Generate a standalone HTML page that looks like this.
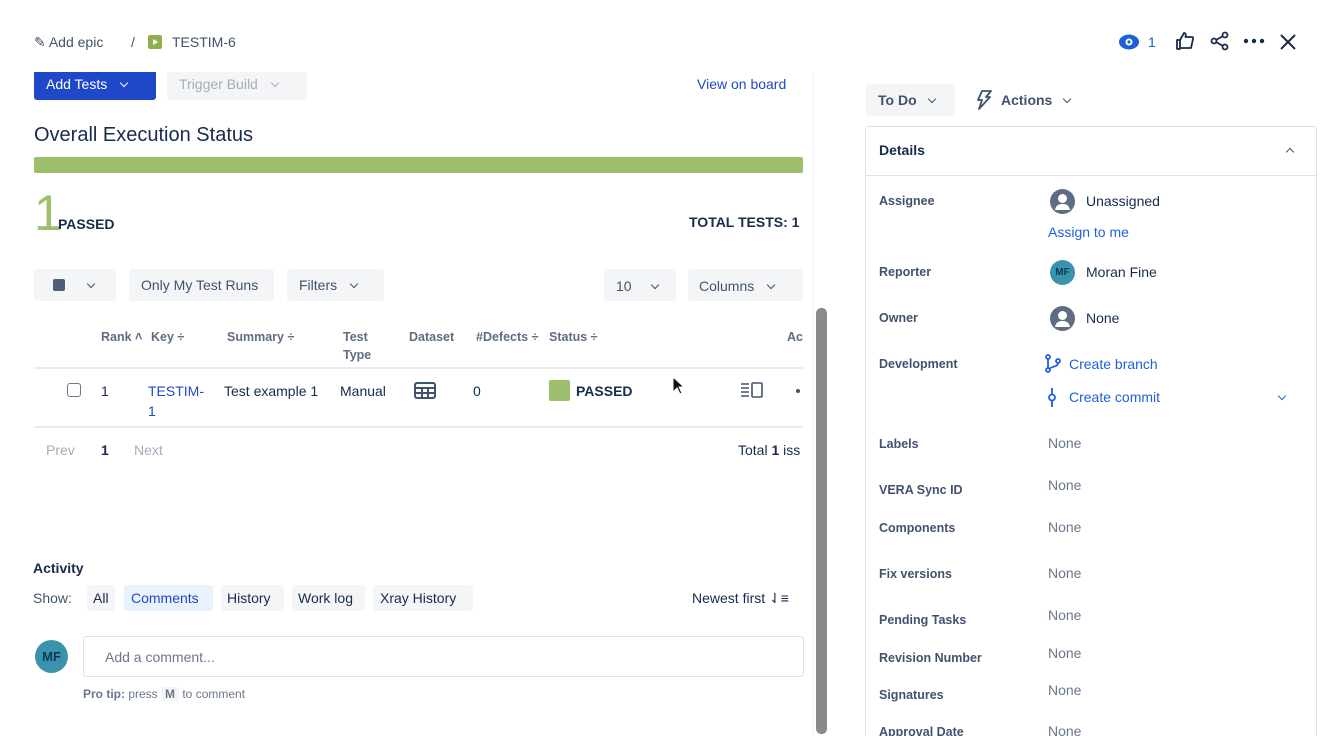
<!DOCTYPE html>
<html><head><meta charset="utf-8"><style>
*{margin:0;padding:0;box-sizing:border-box}
html,body{width:1336px;height:736px;overflow:hidden}
body{background:#fff;font-family:"Liberation Sans",sans-serif;color:#172b4d;position:relative}
.a{position:absolute;white-space:nowrap;line-height:16px}
.btn{position:absolute;background:#f4f5f7;border-radius:3px}
.lbl{position:absolute;left:879px;font-size:12.5px;font-weight:bold;color:#42526e;line-height:16px}
.val{position:absolute;left:1048px;font-size:14px;color:#6b778c;line-height:16px}
.th{position:absolute;font-size:12.5px;font-weight:bold;color:#5e6c84;line-height:18px}
.chev{display:inline-block;width:6px;height:6px;border-right:1.8px solid #42526e;border-bottom:1.8px solid #42526e;transform:rotate(45deg);margin-left:10px;position:relative;top:-3px}
</style></head><body>
<div class="a" style="left:34px;top:34px;font-size:14px;color:#42526e">✎ Add epic</div>
<div class="a" style="left:131px;top:34px;font-size:14px;color:#42526e">/</div>
<div style="position:absolute;left:148px;top:35px;width:14px;height:14px;background:#8fb04d;border-radius:2px"><div style="position:absolute;left:5px;top:3.5px;border-left:5px solid #fff;border-top:3.5px solid transparent;border-bottom:3.5px solid transparent"></div></div>
<div class="a" style="left:172px;top:34px;font-size:14px;color:#42526e">TESTIM-6</div>
<svg style="position:absolute;left:1118px;top:32px" width="22" height="20" viewBox="0 0 22 20"><ellipse cx="11" cy="10" rx="10" ry="7.5" fill="#1d5fd6"/><circle cx="11" cy="10" r="3.5" fill="#fff"/><circle cx="11" cy="10" r="1.6" fill="#1d5fd6"/></svg>
<div class="a" style="left:1148px;top:34px;font-size:14px;color:#1d5fd6">1</div>
<svg style="position:absolute;left:1175px;top:31px" width="20" height="20" viewBox="0 0 20 20" fill="none" stroke="#172b4d" stroke-width="1.8" stroke-linejoin="round"><path d="M2 9h3v9H2zM5 9l4-7c2 0 2 2 1.5 4H17c1 0 1.5 1 1 2l-2 9H5"/></svg>
<svg style="position:absolute;left:1210px;top:31px" width="20" height="20" viewBox="0 0 20 20" fill="none" stroke="#172b4d" stroke-width="1.8"><circle cx="15" cy="4" r="2.5"/><circle cx="4" cy="10" r="2.5"/><circle cx="15" cy="16" r="2.5"/><path d="M6 9l7-4M6 11l7 4"/></svg>
<svg style="position:absolute;left:1243px;top:38px" width="22" height="6" viewBox="0 0 22 6" fill="#172b4d"><circle cx="3" cy="3" r="2.2"/><circle cx="11" cy="3" r="2.2"/><circle cx="19" cy="3" r="2.2"/></svg>
<svg style="position:absolute;left:1279px;top:33px" width="18" height="18" viewBox="0 0 18 18" stroke="#172b4d" stroke-width="2"><path d="M2 2l14 14M16 2L2 16"/></svg>
<div style="position:absolute;left:34px;top:72px;width:122px;height:28px;background:#1f48c9;border-radius:0 0 3px 3px"></div>
<div class="a" style="left:46px;top:76px;font-size:14px;color:#fff">Add Tests<span class="chev" style="border-color:#fff;margin-left:14px"></span></div>
<div class="btn" style="left:167px;top:72px;width:140px;height:28px"></div>
<div class="a" style="left:179px;top:76px;font-size:14px;color:#a5adba">Trigger Build<span class="chev" style="border-color:#a5adba;margin-left:14px"></span></div>
<div class="a" style="left:697px;top:76px;font-size:14px;color:#1f48c9">View on board</div>
<div class="a" style="left:34px;top:123px;font-size:20px;line-height:24px">Overall Execution Status</div>
<div style="position:absolute;left:34px;top:157px;width:769px;height:16px;background:#9dbe6b;border-radius:2px"></div>
<div class="a" style="left:34px;top:188px;font-size:50px;line-height:50px;color:#9dbe6b">1</div>
<div class="a" style="left:58px;top:216px;font-size:14px;font-weight:bold">PASSED</div>
<div class="a" style="left:689px;top:214px;font-size:14px;font-weight:bold">TOTAL TESTS: 1</div>
<div class="btn" style="left:34px;top:269px;width:82px;height:32px"></div>
<div style="position:absolute;left:53px;top:279px;width:12px;height:12px;background:#505f79;border-radius:2px"></div>
<span class="chev" style="position:absolute;left:78px;top:281px"></span>
<div class="btn" style="left:129px;top:269px;width:145px;height:32px"></div>
<div class="a" style="left:141px;top:277px;font-size:14px;color:#42526e">Only My Test Runs</div>
<div class="btn" style="left:287px;top:269px;width:97px;height:32px"></div>
<div class="a" style="left:299px;top:277px;font-size:14px;color:#42526e">Filters<span class="chev" style="margin-left:14px"></span></div>
<div class="btn" style="left:604px;top:269px;width:72px;height:32px"></div>
<div class="a" style="left:616px;top:278px;font-size:14px;color:#42526e">10<span class="chev" style="margin-left:20px"></span></div>
<div class="btn" style="left:688px;top:269px;width:115px;height:32px"></div>
<div class="a" style="left:699px;top:278px;font-size:14px;color:#42526e">Columns<span class="chev" style="margin-left:14px"></span></div>
<div class="th" style="left:101px;top:328px">Rank ˄</div>
<div class="th" style="left:151px;top:328px">Key ÷</div>
<div class="th" style="left:227px;top:328px">Summary ÷</div>
<div class="th" style="left:343px;top:328px">Test<br>Type</div>
<div class="th" style="left:409px;top:328px">Dataset</div>
<div class="th" style="left:476px;top:328px">#Defects ÷</div>
<div class="th" style="left:549px;top:328px">Status ÷</div>
<div class="th" style="left:787px;top:328px">Ac</div>
<div style="position:absolute;left:34px;top:367px;width:769px;height:2px;background:#ebecf0"></div>
<div style="position:absolute;left:67px;top:383px;width:14px;height:14px;border:1.5px solid #6b778c;border-radius:3px"></div>
<div class="a" style="left:101px;top:383px;font-size:14px">1</div>
<div class="a" style="left:148px;top:381px;font-size:14px;color:#1f48c9;line-height:20px">TESTIM-<br>1</div>
<div class="a" style="left:224px;top:383px;font-size:14px">Test example 1</div>
<div class="a" style="left:340px;top:383px;font-size:14px">Manual</div>
<svg style="position:absolute;left:414px;top:382px" width="22" height="17" viewBox="0 0 22 17" fill="none" stroke="#42526e" stroke-width="2"><rect x="1" y="1" width="20" height="15" rx="2"/><path d="M1 6h20M1 11h20M8 6v10M14 6v10"/></svg>
<div class="a" style="left:473px;top:383px;font-size:14px">0</div>
<div style="position:absolute;left:549px;top:380px;width:21px;height:21px;background:#9dbe6b;border-radius:2px"></div>
<div class="a" style="left:576px;top:383px;font-size:14px;font-weight:bold">PASSED</div>
<svg style="position:absolute;left:672px;top:376px" width="14" height="20" viewBox="0 0 14 20"><path d="M1 1v15l4-4 3 6 2-1-3-6h5z" fill="#111" stroke="#fff"/></svg>
<svg style="position:absolute;left:740px;top:382px" width="24" height="16" viewBox="0 0 24 16" fill="none" stroke="#42526e" stroke-width="1.6"><path d="M1 2h8M1 6h8M1 10h8M1 14h8"/><rect x="12" y="1" width="10" height="14" rx="1"/></svg>
<div style="position:absolute;left:796px;top:389px;width:4px;height:4px;border-radius:2px;background:#42526e"></div>
<div style="position:absolute;left:34px;top:426px;width:769px;height:2px;background:#ebecf0"></div>
<div class="a" style="left:46px;top:442px;font-size:14px;color:#a5adba">Prev</div>
<div class="a" style="left:101px;top:442px;font-size:14px;font-weight:bold">1</div>
<div class="a" style="left:134px;top:442px;font-size:14px;color:#a5adba">Next</div>
<div class="a" style="left:738px;top:442px;font-size:14px">Total <b>1</b> iss</div>
<div class="a" style="left:33px;top:560px;font-size:14px;font-weight:bold;color:#172b4d">Activity</div>
<div class="a" style="left:33px;top:590px;font-size:14px;color:#42526e">Show:</div>
<div class="btn" style="left:87px;top:585px;width:28px;height:26px"></div><div class="a" style="left:93px;top:590px;font-size:14px">All</div>
<div class="btn" style="left:124px;top:585px;width:89px;height:26px;background:#e9f2ff"></div><div class="a" style="left:131px;top:590px;font-size:14px;color:#1f48c9">Comments</div>
<div class="btn" style="left:221px;top:585px;width:63px;height:26px"></div><div class="a" style="left:227px;top:590px;font-size:14px">History</div>
<div class="btn" style="left:292px;top:585px;width:73px;height:26px"></div><div class="a" style="left:298px;top:590px;font-size:14px">Work log</div>
<div class="btn" style="left:373px;top:585px;width:100px;height:26px"></div><div class="a" style="left:380px;top:590px;font-size:14px">Xray History</div>
<div class="a" style="left:692px;top:590px;font-size:14px">Newest first ⇃≡</div>
<div style="position:absolute;left:35px;top:640px;width:33px;height:33px;border-radius:50%;background:#3b93ab;color:#0c3b5a;font-size:13px;font-weight:bold;text-align:center;line-height:33px">MF</div>
<div style="position:absolute;left:83px;top:636px;width:721px;height:41px;border:1px solid #dfe1e6;border-radius:3px"></div>
<div class="a" style="left:105px;top:649px;font-size:14px;color:#6b778c">Add a comment...</div>
<div class="a" style="left:83px;top:686px;font-size:12px;color:#6b778c"><b>Pro tip:</b> press <span style="background:#f4f5f7;padding:0 4px;font-weight:bold">M</span> to comment</div>
<div style="position:absolute;left:813px;top:72px;width:1px;height:664px;background:#f1f2f4"></div>
<div style="position:absolute;left:816px;top:308px;width:11px;height:426px;background:#8a8a8a;border-radius:5px"></div>
<div class="btn" style="left:866px;top:84px;width:89px;height:32px"></div>
<div class="a" style="left:878px;top:92px;font-size:14px;font-weight:bold;color:#42526e">To Do<span class="chev" style="margin-left:12px"></span></div>
<svg style="position:absolute;left:975px;top:90px" width="18" height="20" viewBox="0 0 18 20" fill="none" stroke="#42526e" stroke-width="1.8" stroke-linejoin="round"><path d="M7 1h9l-5 6h4L4 19l3-9H3z"/></svg>
<div class="a" style="left:1001px;top:92px;font-size:14px;font-weight:bold;color:#42526e">Actions<span class="chev" style="margin-left:12px"></span></div>
<div style="position:absolute;left:865px;top:126px;width:452px;height:640px;border:1px solid #dfe1e6;border-radius:3px"></div>
<div style="position:absolute;left:866px;top:175px;width:450px;height:1px;background:#dfe1e6"></div>
<div class="a" style="left:879px;top:142px;font-size:14px;font-weight:bold">Details</div>
<span style="position:absolute;left:1287px;top:149px;width:6px;height:6px;border-left:1.8px solid #42526e;border-top:1.8px solid #42526e;transform:rotate(45deg)"></span>
<div class="lbl" style="top:193px">Assignee</div>
<svg style="position:absolute;left:1050px;top:189px" width="25" height="25" viewBox="0 0 25 25"><circle cx="12.5" cy="12.5" r="12.5" fill="#5e6c84"/><circle cx="12.5" cy="9.5" r="4.5" fill="#fff"/><path d="M5 21c1-5 4-6 7.5-6s6.5 1 7.5 6z" fill="#fff"/></svg>
<div class="a" style="left:1086px;top:193px;font-size:14px">Unassigned</div>
<div class="a" style="left:1048px;top:224px;font-size:14px;color:#1f5fe0">Assign to me</div>
<div class="lbl" style="top:264px">Reporter</div>
<div style="position:absolute;left:1050px;top:260px;width:25px;height:25px;border-radius:50%;background:#3b93ab;color:#0c3b5a;font-size:10px;font-weight:bold;text-align:center;line-height:25px">MF</div>
<div class="a" style="left:1086px;top:264px;font-size:14px">Moran Fine</div>
<div class="lbl" style="top:310px">Owner</div>
<svg style="position:absolute;left:1050px;top:306px" width="25" height="25" viewBox="0 0 25 25"><circle cx="12.5" cy="12.5" r="12.5" fill="#5e6c84"/><circle cx="12.5" cy="9.5" r="4.5" fill="#fff"/><path d="M5 21c1-5 4-6 7.5-6s6.5 1 7.5 6z" fill="#fff"/></svg>
<div class="a" style="left:1086px;top:310px;font-size:14px">None</div>
<div class="lbl" style="top:356px">Development</div>
<svg style="position:absolute;left:1045px;top:354px" width="16" height="19" viewBox="0 0 16 19" fill="none" stroke="#1f5fe0" stroke-width="1.8"><circle cx="3" cy="3" r="2"/><circle cx="3" cy="16" r="2"/><circle cx="13" cy="7" r="2"/><path d="M3 5v9M13 9c0 4-6 3-9 6"/></svg>
<div class="a" style="left:1069px;top:356px;font-size:14px;color:#1f5fe0">Create branch</div>
<svg style="position:absolute;left:1047px;top:388px" width="10" height="19" viewBox="0 0 10 19" fill="none" stroke="#1f5fe0" stroke-width="1.8"><circle cx="5" cy="9.5" r="3"/><path d="M5 0v6.5M5 12.5V19"/></svg>
<div class="a" style="left:1069px;top:389px;font-size:14px;color:#1f5fe0">Create commit</div>
<span style="position:absolute;left:1279px;top:393px;width:6px;height:6px;border-right:1.8px solid #1f5fe0;border-bottom:1.8px solid #1f5fe0;transform:rotate(45deg)"></span>
<div class="lbl" style="top:436px">Labels</div><div class="val" style="top:435px">None</div>
<div class="lbl" style="top:482px">VERA Sync ID</div><div class="val" style="top:477px">None</div>
<div class="lbl" style="top:520px">Components</div><div class="val" style="top:519px">None</div>
<div class="lbl" style="top:566px">Fix versions</div><div class="val" style="top:565px">None</div>
<div class="lbl" style="top:612px">Pending Tasks</div><div class="val" style="top:607px">None</div>
<div class="lbl" style="top:650px">Revision Number</div><div class="val" style="top:645px">None</div>
<div class="lbl" style="top:687px">Signatures</div><div class="val" style="top:682px">None</div>
<div class="lbl" style="top:724px">Approval Date</div><div class="val" style="top:723px">None</div>
</body></html>
